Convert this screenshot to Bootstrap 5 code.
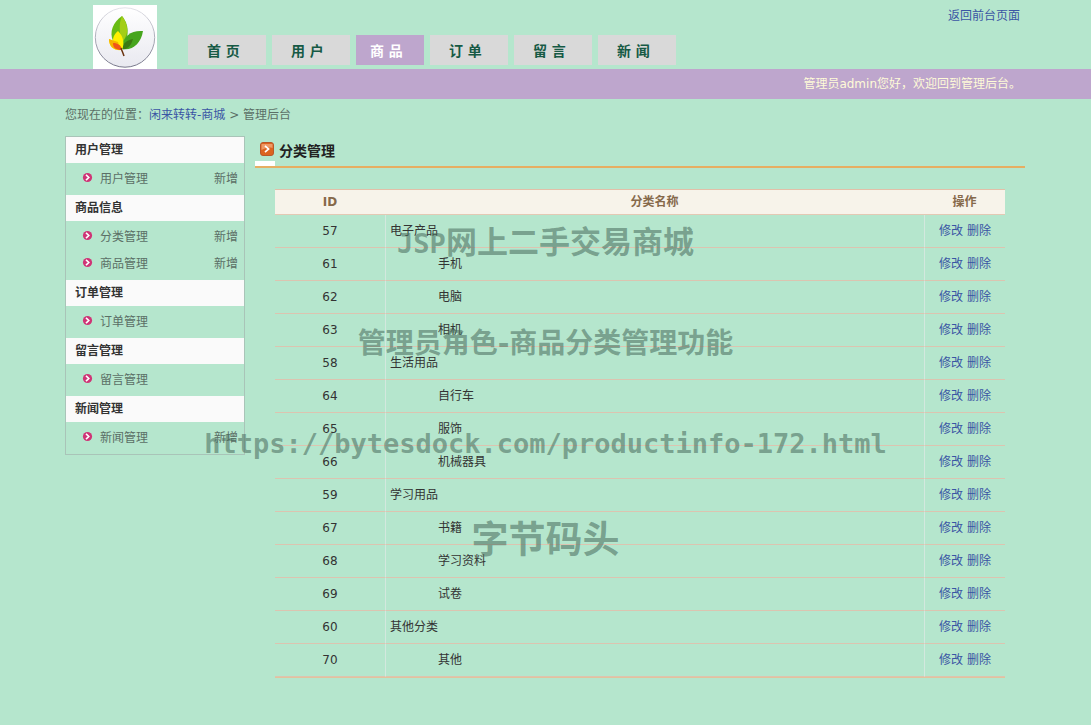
<!DOCTYPE html>
<html lang="zh-CN">
<head>
<meta charset="utf-8">
<meta name="viewport" content="width=device-width, initial-scale=1">
<title>管理后台</title>
<link href="https://cdn.jsdelivr.net/npm/bootstrap@5.3.0/dist/css/bootstrap.min.css" rel="stylesheet">
<style>
  body { background: #b5e6cd; color: #333; font: 12px/18px "DejaVu Sans", "Noto Sans CJK SC", sans-serif; }
  a { color: #3a55a4; text-decoration: none; }
  .page-width { max-width: 961px; padding: 0 1px 0 0; }
  .site-logo { margin-left: 28px; padding-top: 5px; }
  .site-tabs { margin: 0 0 4px 31px; gap: 6px; }
  .site-tabs .nav-link { width: 78px; padding: 2px 0 0 19px; font-size: 14px; font-weight: 700; line-height: 28px; color: #165a45; background: #d9d9d9; }
  .site-tabs .nav-link.active { width: 68px; padding-left: 14px; color: #fff; background: #bea6cd; }
  .back-link { padding: 7px 5px 0 0; }
  .welcome-bar { background: #bea6cd; color: #fffbd8; line-height: 30px; }
  .welcome-bar .page-width { padding-right: 5px; }
  .crumbs { padding: 7px 0 12px; color: #5b6f66; }
  .side-menu { width: 180px; border: 1px solid #a9c4b8; color: #5b6f66; }
  .side-menu h2 { margin: 0; padding-left: 9px; font-size: 12px; font-weight: 700; line-height: 26px; color: #333; background: #fafafa; }
  .side-menu ul { padding: 3px 6px 2px 16px; }
  .side-menu li { line-height: 27px; }
  .side-menu a { color: inherit; }
  .side-menu svg { margin: 0 7px 4px 0; }
  .main-pane { margin-left: 10px; }
  .main-title { border-bottom: 2px solid #e6ae62; height: 32px; }
  .main-title h1 { margin: 0; font-size: 14px; font-weight: 700; line-height: 30px; color: #222; }
  .title-mark { width: 20px; }
  .title-mark i { height: 5px; background: #fff; }
  .title-mark svg { margin: 6px 0 0 5px; }
  .cat-wrap { padding: 21px 20px 0; }
  .cat-table { width: 100%; table-layout: fixed; border-collapse: separate; border-spacing: 0; border-top: 1px solid #e3bfa8; border-bottom: 1px solid #e3c29c; }
  .cat-table th { height: 25px; padding: 0; text-align: center; color: #86694a; background: #f7f3ea; border-bottom: 1px solid #e3c9b4; }
  .cat-table td { height: 33px; padding: 0 4px; border-bottom: 1px solid #dcc4b0; }
  .cat-table td + td { border-left: 1px solid #d3e8de; }
  .cat-table td.sub-cat { padding-left: 52px; }
  .id-col { width: 110px; }
  .act-col { width: 81px; }
  .overlay-text { top: 192px; line-height: 100px; font-weight: 700; color: rgba(75, 110, 95, .58); pointer-events: none; white-space: nowrap; }
  .overlay-text .mono { font-family: "DejaVu Sans Mono", monospace; font-size: 27px; }
  .ov-1 { font-size: 31px; }
  .ov-2 { font-size: 28px; }
  .ov-4 { font-size: 37px; line-height: 84px; }
</style>
</head>
<body class="position-relative overflow-x-hidden">
<svg class="d-none">
  <symbol id="dot" viewBox="0 0 11 11"><circle cx="5.5" cy="5.5" r="4.6" fill="#cf3476"/><path d="M4 2.8 6.8 5.5 4 8.2" fill="none" stroke="#fff" stroke-width="1.6"/></symbol>
</svg>

<header class="container-fluid page-width d-flex align-items-end">
  <a class="site-logo" href="#" aria-label="闲来转转-商城">
    <svg class="d-block" width="64" height="64" viewBox="0 0 64 64">
      <defs><linearGradient id="disc" x2="0" y2="1"><stop offset="0" stop-color="#fff"/><stop offset="1" stop-color="#e9e9f0"/></linearGradient>
      <linearGradient id="rim" x2="0" y2="1"><stop offset="0" stop-color="#e2e2e8"/><stop offset="1" stop-color="#77778a"/></linearGradient></defs>
      <path fill="#fff" d="M0 0h64v64H0z"/>
      <circle cx="32" cy="32.500" r="29.700" fill="url(#disc)" stroke="url(#rim)"/>
      <path d="M29 11C20 17 16 27 20 36l9 8C35 34 38 22 29 11z" fill="#68bb13"/>
      <path d="M29 11c5 7 7 14 3 22l-3 5c-2-9-4-18 0-27z" fill="#a3ce16"/>
      <path d="M50 26c-11-1-20 4-21 18 11 2 19-6 21-18z" fill="#46a51d"/>
      <path d="M40 34c-6 1-10 4-11 10 5 1 9-3 11-10z" fill="#3c7a12"/>
      <path d="M25 26c-4 3-5 7-5 10l-4-2c0 8 5 12 13 11 3-7 1-14-4-19z" fill="#fff000"/>
      <path d="M16 34c0 7 4 11 11 11l-2-8z" fill="#f5b400"/>
      <path d="M20 38c0 5 3 7 9 7-1-5-4-7-9-7z" fill="#f0561a"/>
      <path d="M28 43c1 3 2 5 3 8" fill="none" stroke="#6b3410" stroke-width="1.500"/>
    </svg>
  </a>
  <nav class="site-tabs nav flex-nowrap">
    <a class="nav-link" href="#">首 页</a>
    <a class="nav-link" href="#">用 户</a>
    <a class="nav-link active" aria-current="page" href="#">商 品</a>
    <a class="nav-link" href="#">订 单</a>
    <a class="nav-link" href="#">留 言</a>
    <a class="nav-link" href="#">新 闻</a>
  </nav>
  <div class="back-link ms-auto align-self-start"><a href="#">返回前台页面</a></div>
</header>

<div class="welcome-bar">
  <div class="container-fluid page-width text-end">管理员admin您好，欢迎回到管理后台。</div>
</div>

<div class="container-fluid page-width">
  <div class="crumbs">您现在的位置：<a href="#">闲来转转-商城</a> &gt; 管理后台</div>

  <div class="d-flex align-items-start">
    <aside class="side-menu flex-shrink-0">
      <h2>用户管理</h2>
      <ul class="list-unstyled m-0">
        <li class="d-flex justify-content-between"><a href="#"><svg width="11" height="11"><use href="#dot"/></svg>用户管理</a><a href="#">新增</a></li>
      </ul>
      <h2>商品信息</h2>
      <ul class="list-unstyled m-0">
        <li class="d-flex justify-content-between"><a href="#"><svg width="11" height="11"><use href="#dot"/></svg>分类管理</a><a href="#">新增</a></li>
        <li class="d-flex justify-content-between"><a href="#"><svg width="11" height="11"><use href="#dot"/></svg>商品管理</a><a href="#">新增</a></li>
      </ul>
      <h2>订单管理</h2>
      <ul class="list-unstyled m-0">
        <li><a href="#"><svg width="11" height="11"><use href="#dot"/></svg>订单管理</a></li>
      </ul>
      <h2>留言管理</h2>
      <ul class="list-unstyled m-0">
        <li><a href="#"><svg width="11" height="11"><use href="#dot"/></svg>留言管理</a></li>
      </ul>
      <h2>新闻管理</h2>
      <ul class="list-unstyled m-0">
        <li class="d-flex justify-content-between"><a href="#"><svg width="11" height="11"><use href="#dot"/></svg>新闻管理</a><a href="#">新增</a></li>
      </ul>
    </aside>

    <main class="main-pane flex-grow-1">
      <div class="main-title d-flex">
        <div class="title-mark d-flex flex-column justify-content-between me-1">
          <svg width="14" height="14" viewBox="0 0 14 14"><rect x=".5" y=".5" width="13" height="13" rx="2.500" fill="#dc6420" stroke="#b9582a"/><path d="M1.500 2h11v4c-4-1-7 0-11 2z" fill="#ee9a66"/><path d="M5 3.800 8.600 7 5 10.200" fill="none" stroke="#fff" stroke-width="1.700"/></svg>
          <i class="d-block"></i>
        </div>
        <h1>分类管理</h1>
      </div>
      <div class="cat-wrap">
        <table class="cat-table">
          <colgroup><col class="id-col"><col><col class="act-col"></colgroup>
          <thead><tr><th>ID</th><th>分类名称</th><th>操作</th></tr></thead>
          <tbody>
            <tr><td class="text-center">57</td><td>电子产品</td><td class="text-center"><a href="#">修改</a> <a href="#">删除</a></td></tr>
            <tr><td class="text-center">61</td><td class="sub-cat">手机</td><td class="text-center"><a href="#">修改</a> <a href="#">删除</a></td></tr>
            <tr><td class="text-center">62</td><td class="sub-cat">电脑</td><td class="text-center"><a href="#">修改</a> <a href="#">删除</a></td></tr>
            <tr><td class="text-center">63</td><td class="sub-cat">相机</td><td class="text-center"><a href="#">修改</a> <a href="#">删除</a></td></tr>
            <tr><td class="text-center">58</td><td>生活用品</td><td class="text-center"><a href="#">修改</a> <a href="#">删除</a></td></tr>
            <tr><td class="text-center">64</td><td class="sub-cat">自行车</td><td class="text-center"><a href="#">修改</a> <a href="#">删除</a></td></tr>
            <tr><td class="text-center">65</td><td class="sub-cat">服饰</td><td class="text-center"><a href="#">修改</a> <a href="#">删除</a></td></tr>
            <tr><td class="text-center">66</td><td class="sub-cat">机械器具</td><td class="text-center"><a href="#">修改</a> <a href="#">删除</a></td></tr>
            <tr><td class="text-center">59</td><td>学习用品</td><td class="text-center"><a href="#">修改</a> <a href="#">删除</a></td></tr>
            <tr><td class="text-center">67</td><td class="sub-cat">书籍</td><td class="text-center"><a href="#">修改</a> <a href="#">删除</a></td></tr>
            <tr><td class="text-center">68</td><td class="sub-cat">学习资料</td><td class="text-center"><a href="#">修改</a> <a href="#">删除</a></td></tr>
            <tr><td class="text-center">69</td><td class="sub-cat">试卷</td><td class="text-center"><a href="#">修改</a> <a href="#">删除</a></td></tr>
            <tr><td class="text-center">60</td><td>其他分类</td><td class="text-center"><a href="#">修改</a> <a href="#">删除</a></td></tr>
            <tr><td class="text-center">70</td><td class="sub-cat">其他</td><td class="text-center"><a href="#">修改</a> <a href="#">删除</a></td></tr>
          </tbody>
        </table>
      </div>
    </main>
  </div>
</div>

<div class="overlay-text position-absolute start-0 w-100 text-center">
  <div class="ov-1"><span class="mono">JSP</span>网上二手交易商城</div>
  <div class="ov-2">管理员角色-商品分类管理功能</div>
  <div><span class="mono">https://bytesdock.com/productinfo-172.html</span></div>
  <div class="ov-4">字节码头</div>
</div>
<script src="https://cdn.jsdelivr.net/npm/bootstrap@5.3.0/dist/js/bootstrap.bundle.min.js"></script>
</body>
</html>
